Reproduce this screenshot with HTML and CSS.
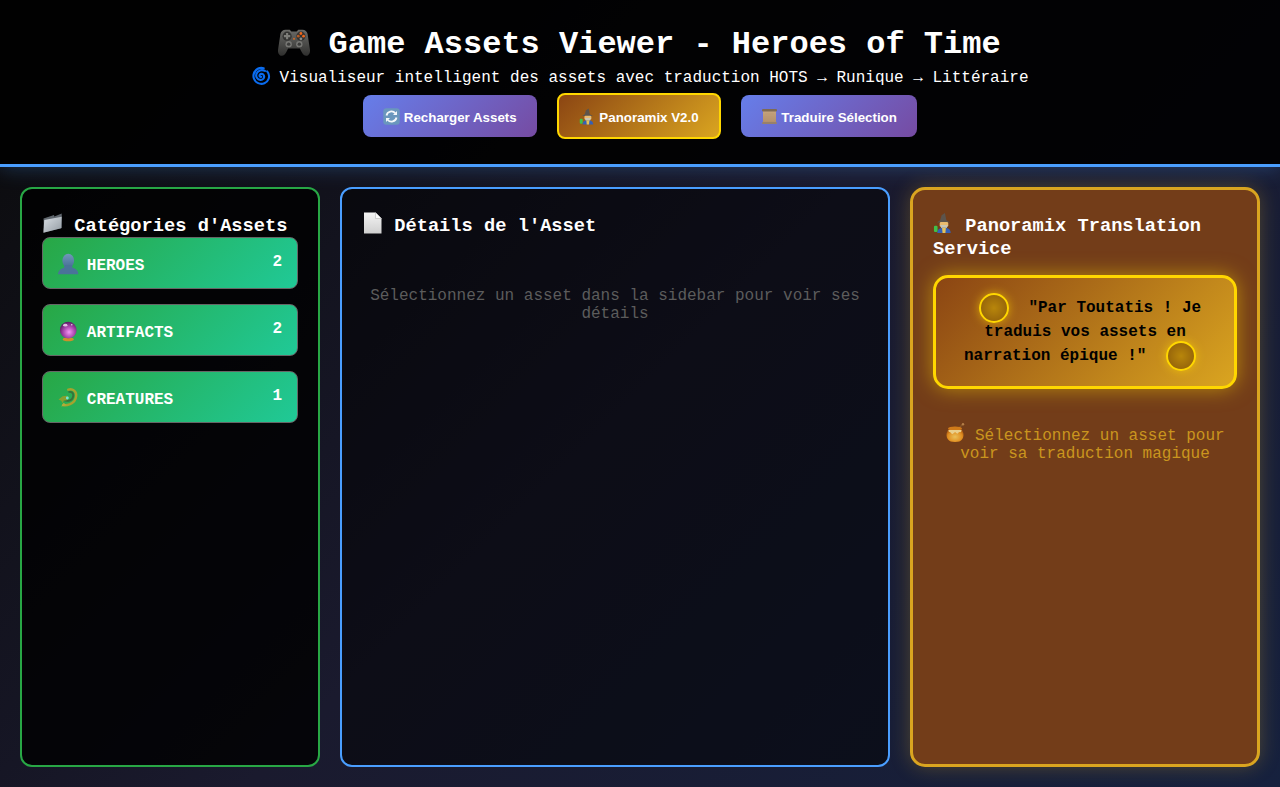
FILE: index.html
```html
<!DOCTYPE html>
<html lang="fr">
<head>
<meta charset="utf-8">
<title>Game Assets Viewer - Heroes of Time</title>
<link rel="stylesheet" href="styles.css">
</head>
<body>
<svg class="sprite" aria-hidden="true">
  <defs>
    <linearGradient id="gBody" x1="0" y1="0" x2="0" y2="1"><stop offset="0" stop-color="#6b6b68"/><stop offset="1" stop-color="#2f2f2e"/></linearGradient>
    <linearGradient id="gFolder" x1="0" y1="0" x2="1" y2="1"><stop offset="0" stop-color="#d9dfe4"/><stop offset="1" stop-color="#939ba3"/></linearGradient>
    <linearGradient id="gPage" x1="0" y1="0" x2="0" y2="1"><stop offset="0" stop-color="#f4f4f4"/><stop offset="1" stop-color="#cfcfcf"/></linearGradient>
    <linearGradient id="gBust" x1="0" y1="0" x2="0" y2="1"><stop offset="0" stop-color="#7297ba"/><stop offset="1" stop-color="#456f95"/></linearGradient>
    <linearGradient id="gScroll" x1="0" y1="0" x2="0" y2="1"><stop offset="0" stop-color="#c9a77f"/><stop offset="1" stop-color="#b08d68"/></linearGradient>
    <radialGradient id="gBall" cx=".55" cy=".62" r=".6"><stop offset="0" stop-color="#f596f5"/><stop offset=".6" stop-color="#a542a8"/><stop offset="1" stop-color="#5b1f66"/></radialGradient>
    <radialGradient id="gHoney" cx=".5" cy=".6" r=".6"><stop offset="0" stop-color="#ffd764"/><stop offset=".7" stop-color="#f49d22"/><stop offset="1" stop-color="#b9610f"/></radialGradient>
    <symbol id="i-pad" viewBox="0 0 32 32">
      <path d="M8 4.500h4l1.500 1.500h5L20 4.500h4c2.500 0 4.300 1.500 4.800 4L31 23c.5 3.500-1.300 6-3.500 6-2 0-3.200-1.500-4.300-3.500L21.500 22h-11l-1.700 3.500C7.700 27.500 6.500 29 4.500 29 2.300 29 .5 26.500 1 23L3.200 8.500C3.700 6 5.500 4.500 8 4.500z" fill="url(#gBody)"/>
      <circle cx="9.500" cy="10.500" r="4.300" fill="#333332"/>
      <path d="M8.500 7.500h2v2h2v2h-2v2h-2v-2h-2v-2h2z" fill="#7d7d79"/>
      <circle cx="22.500" cy="10.500" r="4.300" fill="#333332"/>
      <circle cx="22.500" cy="8" r="1.300" fill="#f0661a"/><circle cx="25" cy="10.500" r="1.300" fill="#f0661a"/><circle cx="20" cy="10.500" r="1.300" fill="#b35a24"/><circle cx="22.500" cy="13" r="1.300" fill="#8d8d88"/>
      <circle cx="11" cy="18" r="3" fill="#777774"/><circle cx="11" cy="18" r="1.600" fill="#3c3c3b"/>
      <circle cx="21" cy="18" r="3" fill="#777774"/><circle cx="21" cy="18" r="1.600" fill="#3c3c3b"/>
      <circle cx="16" cy="13" r="1" fill="#c46a2c"/>
    </symbol>
    <symbol id="i-spiral" viewBox="0 0 20 20">
      <path d="M10.500 10.800c-1.200.5-2.200-.8-1.500-2 .9-1.500 3.400-1.200 4.200.6 1 2.400-1 4.800-3.500 4.600-3.300-.2-5.200-3.500-4-6.500C7 4.400 11 3 14.300 4.800M3.500 6.300C1.300 10.200 3 15.400 7.300 17.300c4.300 1.900 9.300-.1 10.800-4.500 .9-2.700.2-5.500-1.500-7.500" fill="none" stroke="#0a6cf0" stroke-width="2.200" stroke-linecap="round"/>
      <path d="M3.500 6.300C5.500 2.800 9.300 1.200 13 2" fill="none" stroke="#0a6cf0" stroke-width="2.200" stroke-linecap="round"/>
    </symbol>
    <symbol id="i-refresh" viewBox="0 0 17 17">
      <rect x=".3" y=".3" width="16.400" height="16.400" rx="3" fill="#6a97bd"/>
      <path d="M3.500 7.500A5 5 0 0 1 12.300 5.300M13.500 9.500A5 5 0 0 1 4.700 11.700" fill="none" stroke="#f4f7fa" stroke-width="1.800"/>
      <path d="M14 3v4h-4zM3 14v-4h4z" fill="#f4f7fa"/>
    </symbol>
    <symbol id="i-mage" viewBox="0 0 22 22">
      <path d="M12.500 .5l1.500 7.500 4 2.500H4l3.500-2.500 1.500-5z" fill="#5c544c"/>
      <rect x="7" y="10" width="9" height="5" rx="1.500" fill="#e9bb6e"/>
      <path d="M7.500 13h8l-1.500 4.500h-5z" fill="#c9c6b4"/>
      <path d="M4.500 21.500c0-3.500 2.500-5.500 7-5.500s7 2 7 5.500z" fill="#3560b5"/>
      <path d="M9.500 16h4l-.5 5.500h-3z" fill="#e6c25a"/>
      <rect x="1" y="14" width="3.800" height="6.500" rx="1.300" fill="#3ec24a"/>
    </symbol>
    <symbol id="i-scroll" viewBox="0 0 17 17">
      <rect x="2" y="1.500" width="13" height="14" fill="url(#gScroll)"/>
      <rect x="1" y="1" width="15" height="2.500" rx="1" fill="#7f6a52"/>
      <rect x="1" y="14" width="15" height="2" rx="1" fill="#98806a"/>
      <path d="M4 6h9M4 9h9M4 12h9" stroke="#bb9a74" stroke-width=".7"/>
    </symbol>
    <symbol id="i-folder" viewBox="0 0 21 21">
      <path d="M1.500 6L12 2.500l.3 1.500L19.700 1 20 15.500 2 20z" fill="#5f666d"/>
      <path d="M2.300 7.500L19.700 4.200 19 15.800 1.300 20.200z" fill="url(#gFolder)"/>
    </symbol>
    <symbol id="i-page" viewBox="0 0 21 21">
      <path d="M2 0h11.500L19.500 6v15H2z" fill="url(#gPage)"/>
      <path d="M13.500 0L19.500 6h-6z" fill="#fafafa"/>
      <path d="M13.500 0v6h6" fill="none" stroke="#b5b5b5" stroke-width=".6"/>
    </symbol>
    <symbol id="i-bust" viewBox="0 0 22 22">
      <ellipse cx="11" cy="7.500" rx="6.300" ry="7.500" fill="url(#gBust)"/>
      <path d="M7 12h8l.5 3c3 .8 6 2.500 6.500 7H0c.5-4.500 3.500-6.200 6.500-7z" fill="#4a7399"/>
    </symbol>
    <symbol id="i-ball" viewBox="0 0 22 22">
      <ellipse cx="11" cy="20" rx="6" ry="2" fill="#cf8f2a"/>
      <circle cx="11" cy="10" r="9" fill="url(#gBall)"/>
      <ellipse cx="7.800" cy="4.700" rx="2.300" ry="1.400" fill="#f5d5f5" opacity=".85"/>
      <circle cx="14.800" cy="4.300" r=".8" fill="#fff" opacity=".85"/>
    </symbol>
    <symbol id="i-dragon" viewBox="0 0 22 22">
      <path d="M11 2c5-1.500 9 2 8.500 7-.4 4-3 7-6.500 8.500-2.500 1-5.500 1.500-7.500 1" fill="none" stroke="#a5a22e" stroke-width="2.600" stroke-linecap="round"/>
      <path d="M12 4.500c3-.5 4.700 1.500 4.400 4-.3 3-2.500 5-5 5.500-2 .3-3.700.1-5-.8" fill="none" stroke="#35723a" stroke-width="2" stroke-linecap="round"/>
      <path d="M.5 12.500l4.500-3.500 4.500-.5 2.500 2-2.500 3-3.500.5-1 2.500-1.500-2.500z" fill="#86a02f"/>
      <circle cx="10" cy="11" r="1.500" fill="#70e8dc"/>
      <path d="M6 16l-2.500 4 6-1.200" fill="#b0ad3a"/>
    </symbol>
    <symbol id="i-honey" viewBox="0 0 20 20">
      <path d="M13.500 5.500L18 1" stroke="#8a5a2a" stroke-width="1.200"/>
      <circle cx="18" cy="1.300" r="1.200" fill="#c08a50"/>
      <path d="M4 6h12c3 3 3.500 8 .5 11-1 1-2.500 2-6.500 2s-5.500-1-6.500-2C.5 14 1 9 4 6z" fill="url(#gHoney)"/>
      <ellipse cx="10" cy="5.500" rx="7" ry="2" fill="#e0851a"/>
      <path d="M3.500 7h13c0 2-1 2.500-2 2s-1 2-2.500 1.500S11 9 9.500 9.500 8 12 6.500 10.500 5.500 9 4.500 9s-1-1-1-2z" fill="#ffe9a0"/>
    </symbol>
  </defs>
</svg>

<header class="header">
  <h1 class="title"><svg class="ico-title"><use href="#i-pad"/></svg> Game Assets Viewer - Heroes of Time</h1>
  <p class="subtitle"><svg class="ico-sub"><use href="#i-spiral"/></svg> Visualiseur intelligent des assets avec traduction HOTS → Runique → Littéraire</p>
  <div class="actions">
    <button class="btn" type="button"><svg class="ico-btn"><use href="#i-refresh"/></svg> Recharger Assets</button>
    <button class="btn btn-gold" type="button"><svg class="ico-btn"><use href="#i-mage"/></svg> Panoramix V2.0</button>
    <button class="btn" type="button"><svg class="ico-btn"><use href="#i-scroll"/></svg> Traduire Sélection</button>
  </div>
</header>

<main class="layout">
  <section class="panel panel-green">
    <h3 class="panel-title"><svg class="ico-h"><use href="#i-folder"/></svg> Catégories d'Assets</h3>
    <div class="category">
      <span class="cat-name"><svg class="ico-cat"><use href="#i-bust"/></svg> HEROES</span>
      <span class="cat-count">2</span>
    </div>
    <div class="category">
      <span class="cat-name"><svg class="ico-cat"><use href="#i-ball"/></svg> ARTIFACTS</span>
      <span class="cat-count">2</span>
    </div>
    <div class="category">
      <span class="cat-name"><svg class="ico-cat"><use href="#i-dragon"/></svg> CREATURES</span>
      <span class="cat-count">1</span>
    </div>
  </section>

  <section class="panel panel-blue">
    <h3 class="panel-title"><svg class="ico-h"><use href="#i-page"/></svg> Détails de l'Asset</h3>
    <p class="empty">Sélectionnez un asset dans la sidebar pour voir ses détails</p>
  </section>

  <section class="panel panel-gold">
    <h3 class="panel-title"><svg class="ico-h"><use href="#i-mage"/></svg> Panoramix Translation Service</h3>
    <div class="quote"> "Par Toutatis ! Je traduis vos assets en narration épique !" </div>
    <p class="hint"><svg class="ico-hint"><use href="#i-honey"/></svg> Sélectionnez un asset pour voir sa traduction magique</p>
  </section>
</main>
</body>
</html>
```

FILE: styles.css
```css
* { margin: 0; padding: 0; box-sizing: border-box; }

html, body { height: 100%; }

body {
  display: flex;
  flex-direction: column;
  overflow: hidden;
  font-family: "Liberation Mono", "Courier New", monospace;
  color: #fff;
  background: linear-gradient(135deg, #0a0a0a 0%, #1a1a2e 50%, #16213e 100%);
}

.sprite { position: absolute; width: 0; height: 0; }

.header {
  flex: none;
  height: 167px;
  padding-top: 24px;
  text-align: center;
  background: rgba(0, 0, 0, 0.9);
  border-bottom: 3px solid #4a9eff;
  box-shadow: 0 0 20px rgba(74, 158, 255, 0.3);
  position: relative;
}

.title { font-size: 32px; line-height: 42px; height: 42px; font-weight: 700; }
.ico-title { width: 34px; height: 36px; vertical-align: -7px; margin: 0 -2px; }

.subtitle { font-size: 16px; line-height: 18px; height: 18px; }
.ico-sub { width: 19.500px; height: 20px; vertical-align: -4px; margin-right: -1px; }

.actions {
  display: flex;
  justify-content: center;
  align-items: center;
  gap: 20px;
  margin-top: 9px;
}

.btn {
  padding: 12px 20px;
  height: 42px;
  border: 0;
  border-radius: 8px;
  color: #fff;
  font-family: "Liberation Sans", Arial, sans-serif;
  font-size: 13.33px;
  font-weight: 700;
  background: linear-gradient(135deg, #667eea 0%, #764ba2 100%);
}

.btn-gold {
  height: 46px;
  border: 2px solid #ffd700;
  background: linear-gradient(135deg, #8b4513 0%, #daa520 100%);
}

.ico-btn { width: 17px; height: 17px; vertical-align: -3px; }

.layout {
  flex: 1;
  min-height: 0;
  display: grid;
  grid-template-columns: 300px 1fr 350px;
  gap: 20px;
  padding: 20px;
}

.panel {
  padding: 20px;
  border: 2px solid;
  border-radius: 12px;
  background: rgba(0, 0, 0, 0.8);
}

.panel-green { border-color: #28a745; }
.panel-blue { border-color: #4a9eff; background: rgba(0, 0, 0, 0.5); }
.panel-gold {
  border: 3px solid #daa520;
  padding: 19px 20px 20px;
  border-radius: 15px;
  background: #733d19;
  box-shadow: 0 0 20px rgba(218, 165, 32, 0.3);
}

.panel-title { font-size: 18.72px; font-weight: 700; }
.panel-gold .panel-title { line-height: 23px; }
.ico-h { width: 21px; height: 28px; vertical-align: -6px; }

.category {
  display: flex;
  justify-content: space-between;
  align-items: flex-start;
  height: 52px;
  padding: 15px;
  margin-bottom: 15px;
  border: 1px solid #666;
  border-radius: 8px;
  background: linear-gradient(135deg, #28a745 0%, #20c997 100%);
  font-weight: 700;
  font-size: 16px;
}

.cat-name { display: block; height: 20px; line-height: 18px; }
.ico-cat { width: 20.500px; height: 22px; vertical-align: -5px; margin-right: -1.300px; }

.empty {
  padding: 50px 0 0;
  text-align: center;
  font-size: 16px;
  color: #5c5c5c;
}

.quote {
  margin: 14px 0 15px;
  padding: 15px;
  border: 3px solid #ffd700;
  border-radius: 15px;
  text-align: center;
  font-size: 16px;
  font-weight: 700;
  color: #000;
  background: linear-gradient(135deg, #8b4513 0%, #daa520 100%);
  box-shadow: 0 0 20px rgba(255, 215, 0, 0.5);
}

.quote::before,
.quote::after {
  content: "";
  display: inline-block;
  box-sizing: border-box;
  width: 30px;
  height: 30px;
  margin: 0 10px;
  vertical-align: middle;
  border: 2px solid #ffd700;
  border-radius: 50%;
  background: radial-gradient(circle, #b8860b 0%, #8b5a0b 100%);
  box-shadow: 0 0 10px rgba(255, 215, 0, 0.6);
}

.hint {
  padding: 19px 0 20px;
  text-align: center;
  font-size: 16px;
  color: #daa520;
  opacity: 0.85;
}

.ico-hint { width: 20px; height: 20px; vertical-align: -3px; }
```
